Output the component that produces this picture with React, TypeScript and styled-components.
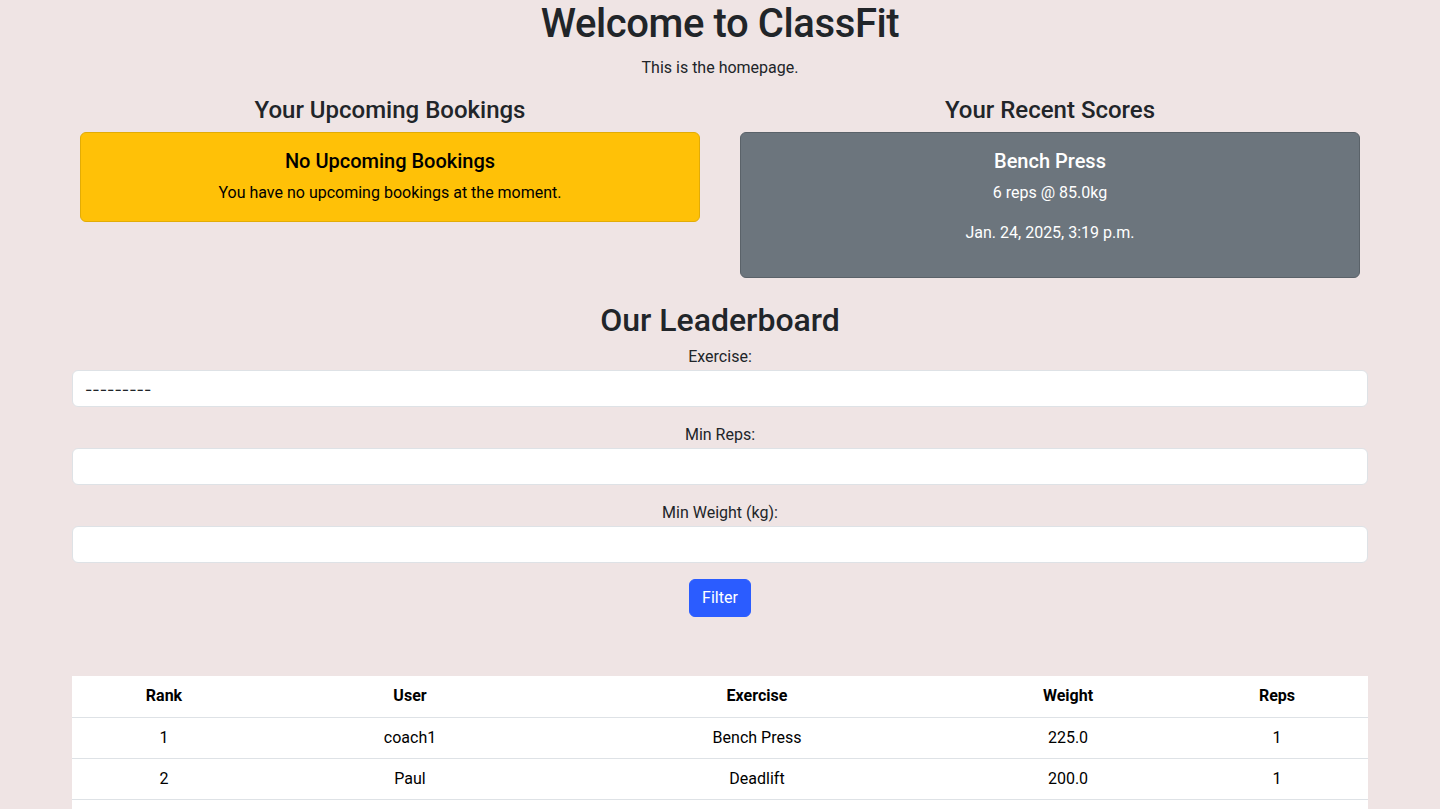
import styled, { createGlobalStyle } from "styled-components";

const GlobalStyle = createGlobalStyle`
  * { box-sizing: border-box; }
  body {
    margin: 0;
    background-color: #efe4e4;
    color: #212529;
    font-family: Roboto, "Liberation Sans", sans-serif;
    font-size: 16px;
    line-height: 1.5;
  }
`;

const Container = styled.div`
  width: 1296px;
  margin: 0 auto;
  text-align: center;
`;

const Title = styled.h1`
  margin: 0 0 8px;
  font-size: 40px;
  font-weight: 500;
  line-height: 1.2;
  letter-spacing: -0.4px;
`;

const Lead = styled.p`
  margin: 0 0 16px;
`;

const Row = styled.div`
  display: grid;
  grid-template-columns: 1fr 1fr;
  column-gap: 24px;
  align-items: start;
`;

const Column = styled.div`
  display: flex;
  flex-direction: column;
`;

const SectionTitle = styled.h3`
  margin: 0 0 7px;
  font-size: 24px;
  font-weight: 500;
  line-height: 1.2;
`;

const Card = styled.div<{ $variant: "warning" | "secondary" }>`
  margin: 0 8px;
  border-radius: 6px;
  border: 1px solid
    ${(p) => (p.$variant === "warning" ? "#e2ac06" : "#5a6269")};
  background-color: ${(p) => (p.$variant === "warning" ? "#ffc107" : "#6c757d")};
  color: ${(p) => (p.$variant === "warning" ? "#000" : "#fff")};
  padding: 16px;
`;

const CardTitle = styled.h5`
  margin: 0 0 8px;
  font-size: 20px;
  font-weight: 500;
  line-height: 24px;
`;

const CardText = styled.p<{ $last?: boolean }>`
  margin: 0 0 ${(p) => (p.$last ? "0" : "16px")};
`;

const BoardTitle = styled.h2`
  margin: 23px 0 6px;
  font-size: 32px;
  font-weight: 500;
  line-height: 1.2;
`;

const Form = styled.form`
  display: flex;
  flex-direction: column;
  align-items: center;
`;

const Field = styled.div`
  width: 100%;
  display: flex;
  flex-direction: column;
  margin-bottom: 16px;
`;

const Label = styled.label`
  display: block;
  margin-bottom: 1px;
`;

const Control = styled.input`
  width: 100%;
  height: 37px;
  padding: 6px 12px;
  font: inherit;
  color: #212529;
  background-color: #fff;
  border: 1px solid #dee2e6;
  border-radius: 6px;
  appearance: none;
`;

const SelectControl = styled(Control).attrs({ as: "select" })`
  text-align: left;
  font-family: Inter, Roboto, sans-serif;
`;

const Button = styled.button`
  height: 38px;
  padding: 6px 12px;
  font: inherit;
  color: #fff;
  background-color: #2b5cff;
  border: 1px solid #2b5cff;
  border-radius: 6px;
  cursor: pointer;
`;

const Table = styled.table`
  width: 100%;
  margin-top: 59px;
  border-collapse: collapse;
  background-color: #fff;
  color: #000;
`;

const Th = styled.th`
  height: 41px;
  padding: 8px;
  font-weight: 700;
  border-bottom: 1px solid #dee2e6;
`;

const Td = styled.td`
  height: 41px;
  padding: 8px;
  border-bottom: 1px solid #dee2e6;
`;

const rows = [
  { rank: 1, user: "coach1", exercise: "Bench Press", weight: "225.0", reps: 1 },
  { rank: 2, user: "Paul", exercise: "Deadlift", weight: "200.0", reps: 1 },
  { rank: 3, user: "coach1", exercise: "Squat", weight: "180.0", reps: 1 },
];

export default function App() {
  return (
    <>
      <GlobalStyle />
      <Container>
        <Title>Welcome to ClassFit</Title>
        <Lead>This is the homepage.</Lead>

        <Row>
          <Column>
            <SectionTitle>Your Upcoming Bookings</SectionTitle>
            <Card $variant="warning">
              <CardTitle>No Upcoming Bookings</CardTitle>
              <CardText $last>You have no upcoming bookings at the moment.</CardText>
            </Card>
          </Column>
          <Column>
            <SectionTitle>Your Recent Scores</SectionTitle>
            <Card $variant="secondary">
              <CardTitle>Bench Press</CardTitle>
              <CardText>6 reps @ 85.0kg</CardText>
              <CardText>Jan. 24, 2025, 3:19 p.m.</CardText>
            </Card>
          </Column>
        </Row>

        <BoardTitle>Our Leaderboard</BoardTitle>
        <Form onSubmit={(e) => e.preventDefault()}>
          <Field>
            <Label htmlFor="exercise">Exercise:</Label>
            <SelectControl id="exercise" defaultValue="">
              <option value="">---------</option>
              <option value="bench">Bench Press</option>
              <option value="deadlift">Deadlift</option>
            </SelectControl>
          </Field>
          <Field>
            <Label htmlFor="min_reps">Min Reps:</Label>
            <Control id="min_reps" type="number" />
          </Field>
          <Field>
            <Label htmlFor="min_weight">Min Weight (kg):</Label>
            <Control id="min_weight" type="number" />
          </Field>
          <Button type="submit">Filter</Button>
        </Form>

        <Table>
          <colgroup>
            <col style={{ width: 184 }} />
            <col style={{ width: 308 }} />
            <col style={{ width: 386 }} />
            <col style={{ width: 236 }} />
            <col style={{ width: 182 }} />
          </colgroup>
          <thead>
            <tr>
              <Th>Rank</Th>
              <Th>User</Th>
              <Th>Exercise</Th>
              <Th>Weight</Th>
              <Th>Reps</Th>
            </tr>
          </thead>
          <tbody>
            {rows.map((r) => (
              <tr key={r.rank}>
                <Td>{r.rank}</Td>
                <Td>{r.user}</Td>
                <Td>{r.exercise}</Td>
                <Td>{r.weight}</Td>
                <Td>{r.reps}</Td>
              </tr>
            ))}
          </tbody>
        </Table>
      </Container>
    </>
  );
}
